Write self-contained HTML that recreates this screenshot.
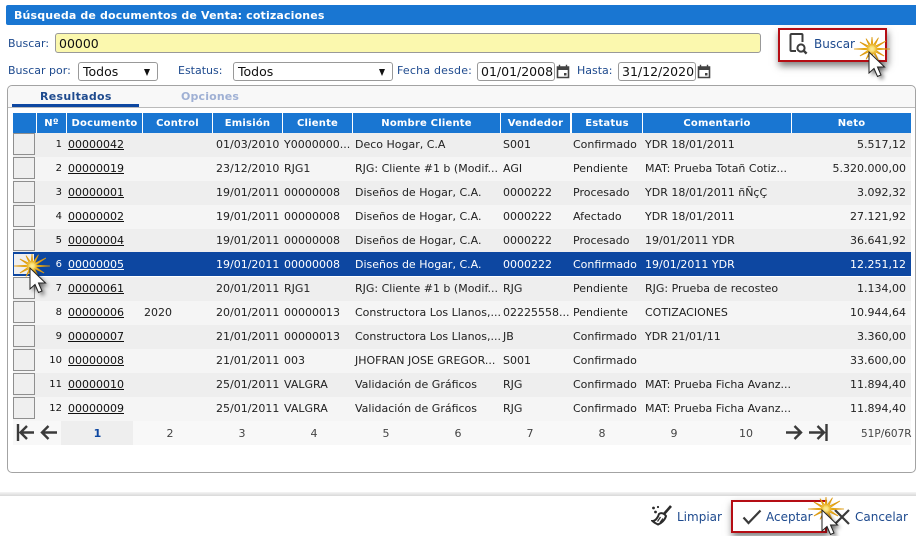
<!DOCTYPE html>
<html><head><meta charset="utf-8">
<style>
*{box-sizing:border-box}
html,body{margin:0;padding:0;width:916px;height:536px;overflow:hidden;background:#fff;font:11px/14px "DejaVu Sans",Verdana,sans-serif;color:#222}
.a{position:absolute;white-space:nowrap}
.lb{color:#1e4a8e}
.title{left:6px;top:5px;width:910px;height:20px;background:#1976d2;border-radius:2px 0 0 2px;color:#fff;font-weight:bold;font-size:11px;line-height:21px;padding-left:8px;letter-spacing:.15px}
.inp{background:#fff;border:1px solid #999;border-radius:3px;height:19px;font-size:12.5px;line-height:17px;color:#111;padding-left:4px}
.sel::after{content:"";position:absolute;right:7px;top:6px;border:4px solid transparent;border-top:7px solid #111;border-bottom:0;border-left-width:3.5px;border-right-width:3.5px}
.panel{left:7px;top:85px;width:909px;height:388px;border:1px solid #a3a3a3;border-radius:5px}
.tabbar{left:8px;top:86px;width:907px;height:22px;background:#f8f8f8;border-bottom:1px solid #bbb;border-radius:5px 5px 0 0}
.th{top:113px;height:20px;background:#1976d2;color:#fff;font-weight:bold;font-size:10px;line-height:21px;text-align:center;letter-spacing:.2px}
.row{position:absolute;left:13px;width:898px;height:24px;line-height:23px;color:#222}
.row span{position:absolute;top:0;white-space:nowrap}
.row .n{font-size:10px;right:auto;left:25px;width:24px;text-align:right;color:#111}
.row u{color:#111}
.o{background:#eeeeee}.e{background:#f5f5f5}
.row.sel2{background:#0d47a1;color:#fff;line-height:25px}
.row.sel2 u,.row.sel2 .n{color:#fff}
.c1{left:55px}.c2{left:131px}.c3{left:203px}.c4{left:271px}.c5{left:342px}.c6{left:490px}.c7{left:560px}.c8{left:632px}
.row .c9{right:5px}
.box{position:absolute;left:13px;width:22px;height:22px;background:#efefef;border:1px solid #8f8f8f}
.pg{top:421px;height:24px;line-height:25px;text-align:center;width:72px;color:#444}
</style></head><body>
<div class="a title">Búsqueda de documentos de Venta: cotizaciones</div>

<div class="a lb" style="left:8px;top:37px">Buscar:</div>
<div class="a inp" style="left:55px;top:33px;width:706px;height:20px;background:#fbf8ae;padding-left:3px;line-height:20px">00000</div>

<div class="a lb" style="left:8px;top:64px">Buscar por:</div>
<div class="a inp sel" style="left:78px;top:62px;width:80px;padding-left:4px">Todos</div>
<div class="a lb" style="left:178px;top:64px">Estatus:</div>
<div class="a inp sel" style="left:233px;top:62px;width:160px;padding-left:4px">Todos</div>
<div class="a lb" style="left:397px;top:64px;letter-spacing:.2px">Fecha desde:</div>
<div class="a inp" style="left:477px;top:62px;width:78px;padding-left:3px">01/01/2008</div>
<svg class="a" style="left:556px;top:64px" width="14" height="15" viewBox="0 0 14 15"><path d="M1.5 3h11v10.5h-11z" fill="none" stroke="#444" stroke-width="1.6"/><path d="M1 2.500h12v3.500H1z" fill="#444"/><path d="M3.500 0.800v2M10.500 .8v2" stroke="#444" stroke-width="1.4"/><rect x="8" y="9" width="2.500" height="2.500" fill="#444"/></svg>
<div class="a lb" style="left:577px;top:64px">Hasta:</div>
<div class="a inp" style="left:618px;top:62px;width:78px;padding-left:3px">31/12/2020</div>
<svg class="a" style="left:697px;top:64px" width="14" height="15" viewBox="0 0 14 15"><path d="M1.5 3h11v10.5h-11z" fill="none" stroke="#444" stroke-width="1.6"/><path d="M1 2.500h12v3.500H1z" fill="#444"/><path d="M3.500 0.800v2M10.500 .8v2" stroke="#444" stroke-width="1.4"/><rect x="8" y="9" width="2.500" height="2.500" fill="#444"/></svg>

<!-- Buscar button -->
<div class="a" style="left:778px;top:28px;width:109px;height:34px;border:2px solid #b50d14;box-shadow:1px 4px 7px rgba(0,0,0,.5);background:#fff"></div>
<svg class="a" style="left:789px;top:33px" width="20" height="22" viewBox="0 0 20 22"><path d="M7 18H2.500a1 1 0 0 1-1-1V2a1 1 0 0 1 1-1h10a1 1 0 0 1 1 1v7" fill="none" stroke="#3c3c3c" stroke-width="2"/><circle cx="12" cy="15" r="3.600" fill="none" stroke="#3c3c3c" stroke-width="2"/><path d="M14.600 17.600l3 3" stroke="#3c3c3c" stroke-width="2.400"/></svg>
<div class="a lb" style="left:814px;top:37px;font-size:12px">Buscar</div>

<!-- Panel -->
<div class="a panel"></div>
<div class="a tabbar"></div>
<div class="a" style="left:40px;top:90px;font-weight:bold;color:#1e4a8e;letter-spacing:.3px">Resultados</div>
<div class="a" style="left:12px;top:104px;width:127px;height:3px;background:#0d47a1"></div>
<div class="a" style="left:181px;top:90px;font-weight:bold;color:#9fb0d4;letter-spacing:.15px">Opciones</div>

<!-- Header -->
<div class="a th" style="left:13px;width:23px"></div>
<div class="a th" style="left:37px;width:29px">Nº</div>
<div class="a th" style="left:67px;width:75px">Documento</div>
<div class="a th" style="left:143px;width:69px">Control</div>
<div class="a th" style="left:213px;width:69px">Emisión</div>
<div class="a th" style="left:283px;width:69px">Cliente</div>
<div class="a th" style="left:353px;width:147px">Nombre Cliente</div>
<div class="a th" style="left:501px;width:69px">Vendedor</div>
<div class="a th" style="left:572px;width:70px">Estatus</div>
<div class="a th" style="left:643px;width:148px">Comentario</div>
<div class="a th" style="left:792px;width:119px">Neto</div>

<!-- Rows -->
<div class="row o" style="top:133px"><span class="n">1</span><span class="c1"><u>00000042</u></span><span class="c3">01/03/2010</span><span class="c4">Y0000000...</span><span class="c5">Deco Hogar, C.A</span><span class="c6">S001</span><span class="c7">Confirmado</span><span class="c8">YDR 18/01/2011</span><span class="c9">5.517,12</span></div>
<div class="row e" style="top:157px"><span class="n">2</span><span class="c1"><u>00000019</u></span><span class="c3">23/12/2010</span><span class="c4">RJG1</span><span class="c5">RJG: Cliente #1 b (Modif...</span><span class="c6">AGI</span><span class="c7">Pendiente</span><span class="c8">MAT: Prueba Totañ Cotiz...</span><span class="c9">5.320.000,00</span></div>
<div class="row o" style="top:181px"><span class="n">3</span><span class="c1"><u>00000001</u></span><span class="c3">19/01/2011</span><span class="c4">00000008</span><span class="c5">Diseños de Hogar, C.A.</span><span class="c6">0000222</span><span class="c7">Procesado</span><span class="c8">YDR 18/01/2011 ñÑçÇ</span><span class="c9">3.092,32</span></div>
<div class="row e" style="top:205px"><span class="n">4</span><span class="c1"><u>00000002</u></span><span class="c3">19/01/2011</span><span class="c4">00000008</span><span class="c5">Diseños de Hogar, C.A.</span><span class="c6">0000222</span><span class="c7">Afectado</span><span class="c8">YDR 18/01/2011</span><span class="c9">27.121,92</span></div>
<div class="row o" style="top:229px"><span class="n">5</span><span class="c1"><u>00000004</u></span><span class="c3">19/01/2011</span><span class="c4">00000008</span><span class="c5">Diseños de Hogar, C.A.</span><span class="c6">0000222</span><span class="c7">Procesado</span><span class="c8">19/01/2011 YDR</span><span class="c9">36.641,92</span></div>
<div class="row sel2" style="top:252px"><span class="n">6</span><span class="c1"><u>00000005</u></span><span class="c3">19/01/2011</span><span class="c4">00000008</span><span class="c5">Diseños de Hogar, C.A.</span><span class="c6">0000222</span><span class="c7">Confirmado</span><span class="c8">19/01/2011 YDR</span><span class="c9">12.251,12</span></div>
<div class="row o" style="top:277px"><span class="n">7</span><span class="c1"><u>00000061</u></span><span class="c3">20/01/2011</span><span class="c4">RJG1</span><span class="c5">RJG: Cliente #1 b (Modif...</span><span class="c6">RJG</span><span class="c7">Pendiente</span><span class="c8">RJG: Prueba de recosteo</span><span class="c9">1.134,00</span></div>
<div class="row e" style="top:301px"><span class="n">8</span><span class="c1"><u>00000006</u></span><span class="c2">2020</span><span class="c3">20/01/2011</span><span class="c4">00000013</span><span class="c5">Constructora Los Llanos,...</span><span class="c6">02225558...</span><span class="c7">Pendiente</span><span class="c8">COTIZACIONES</span><span class="c9">10.944,64</span></div>
<div class="row o" style="top:325px"><span class="n">9</span><span class="c1"><u>00000007</u></span><span class="c3">21/01/2011</span><span class="c4">00000013</span><span class="c5">Constructora Los Llanos,...</span><span class="c6">JB</span><span class="c7">Confirmado</span><span class="c8">YDR 21/01/11</span><span class="c9">3.360,00</span></div>
<div class="row e" style="top:349px"><span class="n">10</span><span class="c1"><u>00000008</u></span><span class="c3">21/01/2011</span><span class="c4">003</span><span class="c5">JHOFRAN JOSE GREGOR...</span><span class="c6">S001</span><span class="c7">Confirmado</span><span class="c9">33.600,00</span></div>
<div class="row o" style="top:373px"><span class="n">11</span><span class="c1"><u>00000010</u></span><span class="c3">25/01/2011</span><span class="c4">VALGRA</span><span class="c5">Validación de Gráficos</span><span class="c6">RJG</span><span class="c7">Confirmado</span><span class="c8">MAT: Prueba Ficha Avanz...</span><span class="c9">11.894,40</span></div>
<div class="row e" style="top:397px"><span class="n">12</span><span class="c1"><u>00000009</u></span><span class="c3">25/01/2011</span><span class="c4">VALGRA</span><span class="c5">Validación de Gráficos</span><span class="c6">RJG</span><span class="c7">Confirmado</span><span class="c8">MAT: Prueba Ficha Avanz...</span><span class="c9">11.894,40</span></div>

<!-- Row boxes -->
<div class="box" style="top:133px"></div>
<div class="box" style="top:157px"></div>
<div class="box" style="top:181px"></div>
<div class="box" style="top:205px"></div>
<div class="box" style="top:229px"></div>
<div class="box" style="top:253px;border-color:#0d47a1"></div>
<div class="box" style="top:277px"></div>
<div class="box" style="top:301px"></div>
<div class="box" style="top:325px"></div>
<div class="box" style="top:349px"></div>
<div class="box" style="top:373px"></div>
<div class="box" style="top:397px"></div>

<!-- Pager -->
<div class="a" style="left:13px;top:421px;width:898px;height:24px;background:#f8f8f8"></div>
<svg class="a" style="left:15px;top:423px" width="44" height="20" viewBox="0 0 44 20" fill="none" stroke="#3a3a3a" stroke-width="2.400"><path d="M3 1v17M19 9.500H6M12 3L5.500 9.500 12 16"/><path d="M42 9.500H27M33.500 3L27 9.500 33.500 16"/></svg>
<div class="a pg" style="left:61px;background:#eeeeee;color:#0d47a1;font-weight:bold;padding-left:1px">1</div>
<div class="a pg" style="left:134px">2</div>
<div class="a pg" style="left:206px">3</div>
<div class="a pg" style="left:278px">4</div>
<div class="a pg" style="left:350px">5</div>
<div class="a pg" style="left:422px">6</div>
<div class="a pg" style="left:494px">7</div>
<div class="a pg" style="left:566px">8</div>
<div class="a pg" style="left:638px">9</div>
<div class="a pg" style="left:710px">10</div>
<svg class="a" style="left:784px;top:423px" width="46" height="20" viewBox="0 0 46 20" fill="none" stroke="#3a3a3a" stroke-width="2.400"><path d="M2 9.500H17M10.500 3L17 9.500 10.500 16"/><path d="M25 9.500H40M33.500 3L40 9.500 33.500 16M42.500 1v17"/></svg>
<div class="a" style="left:861px;top:427px;color:#444;font-size:10.500px">51P/607R</div>

<!-- Footer -->
<div class="a" style="left:0;top:492px;width:916px;height:4px;background:linear-gradient(#f4f4f4,#d8d8d8)"></div>

<svg class="a" style="left:651px;top:505px" width="22" height="22" viewBox="0 0 22 22" fill="none" stroke="#2c2c2c"><path d="M20 1L13 9" stroke-width="2.600"/><path d="M8 9c2-1.500 5-1 7 2-1 4-5 7.500-8 8.500-1-.5-3.500-1.500-5.500-3.500 3 0 5.500-3.500 6.500-7z" stroke-width="2" fill="#fff"/><path d="M9.500 12l-3 4.500M12 13.500l-3 4" stroke-width="1.200"/><circle cx="2.500" cy="3" r="1.400" fill="#2c2c2c" stroke="none"/><circle cx="7" cy="2" r="1.100" fill="#2c2c2c" stroke="none"/><circle cx="4.500" cy="7" r="1.400" fill="#2c2c2c" stroke="none"/></svg>
<div class="a lb" style="left:677px;top:510px;font-size:12px">Limpiar</div>

<div class="a" style="left:731px;top:500px;width:96px;height:33px;border:2px solid #b50d14;box-shadow:1px 4px 7px rgba(0,0,0,.5);background:#fff"></div>
<svg class="a" style="left:742px;top:509px" width="20" height="16" viewBox="0 0 20 16" fill="none" stroke="#3a3a3a" stroke-width="2.200"><path d="M1.500 8.500L6.500 14 18.500 1.500"/></svg>
<div class="a lb" style="left:766px;top:510px;font-size:12px">Aceptar</div>
<svg class="a" style="left:834px;top:509px" width="16" height="16" viewBox="0 0 16 16" fill="none" stroke="#3a3a3a" stroke-width="2.200"><path d="M1 1l14 14M15 1L1 15"/></svg>
<div class="a lb" style="left:855px;top:510px;font-size:12px">Cancelar</div>

<!-- Cursors -->
<svg class="a" style="left:0;top:0" width="916" height="536" viewBox="0 0 916 536">
<defs>
<filter id="s" x="-60%" y="-60%" width="240%" height="240%"><feGaussianBlur stdDeviation="2.200"/></filter>
<filter id="g" x="-100%" y="-100%" width="300%" height="300%"><feGaussianBlur stdDeviation="1.500"/></filter>
<g id="star">
<path d="M18 0L3.400 .9 12.100 7 2.500 2.500 6.500 11.300 .9 3.400 0 12-.9 3.400-6 10.400-2.500 2.500-12.100 7-3.400 .9-18 0-3.400-.9-12.100-7-2.500-2.500-6-10.400-.9-3.400 0-12 .9-3.400 6.500-11.300 2.500-2.500 13.900-8 3.400-.9z" fill="#f4c21c" stroke="#dd9a10" stroke-width=".8"/>
<circle r="3.500" fill="#fbeea0" filter="url(#g)"/>
</g>
<path id="cur" d="M0 0v21l5-4.500 3.500 8 3.500-1.500-3.500-8h7z"/>
</defs>
<use href="#star" x="872" y="49"/>
<use href="#cur" x="872" y="55" fill="#000" opacity=".55" filter="url(#s)"/>
<use href="#cur" x="869" y="52" fill="#fff" stroke="#222" stroke-width="1"/>

<use href="#star" x="32" y="266"/>
<use href="#cur" x="33" y="271" fill="#000" opacity=".55" filter="url(#s)"/>
<use href="#cur" x="30" y="268" fill="#fff" stroke="#222" stroke-width="1"/>

<use href="#star" x="826" y="509"/>
<use href="#cur" x="825" y="513" fill="#000" opacity=".55" filter="url(#s)"/>
<use href="#cur" x="822" y="510" fill="#fff" stroke="#222" stroke-width="1"/>
</svg>
</body></html>
